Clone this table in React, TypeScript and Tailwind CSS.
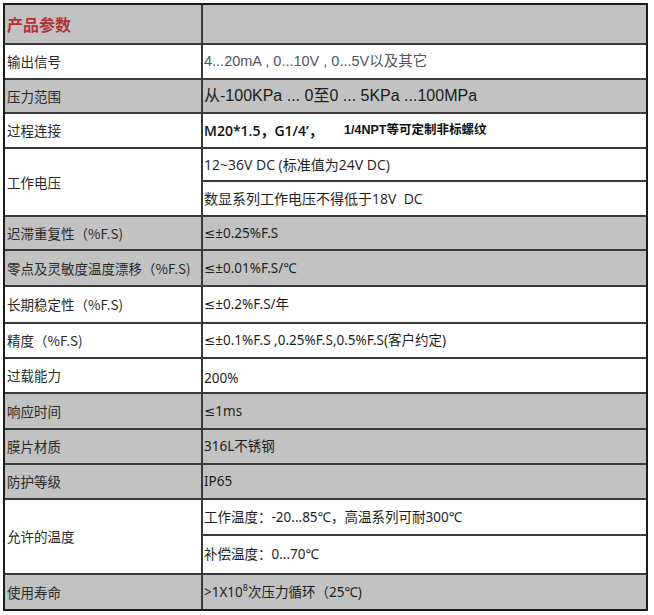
import React from "react";

const CJK = "font-['Noto_Sans_CJK_SC',sans-serif]";
const ARIAL = "font-['Liberation_Sans','Noto_Sans_CJK_SC',sans-serif]";
const VAL = "font-['Noto_Sans','DejaVu_Sans','Noto_Sans_CJK_SC',sans-serif]";
const OPEN = "font-['Open_Sans','Noto_Sans_CJK_SC',sans-serif]";

type Row = {
  label: React.ReactNode;
  value: React.ReactNode;
  h: string;
  gray?: boolean;
  sub?: React.ReactNode;
  subH?: string;
};

const rows: Row[] = [
  {
    label: "输出信号",
    value: <span className={`${ARIAL} text-[14.5px] text-[#555]`}>4...20mA , 0...10V , 0...5V以及其它</span>,
    h: "h-[35px]",
  },
  {
    label: "压力范围",
    value: <span className={`${ARIAL} text-[16px] text-[#1a1a1a]`}>从-100KPa ... 0至0 ... 5KPa ...100MPa</span>,
    h: "h-[34px]",
    gray: true,
  },
  {
    label: "过程连接",
    value: (
      <span className={`${ARIAL} text-[12.5px] font-bold text-[#111] flex items-center`}>
        <span className={`w-[140px] text-[14px] font-semibold ${OPEN}`}>M20*1.5，G1/4’，</span>
        <span>1/4NPT等可定制非标螺纹</span>
      </span>
    ),
    h: "h-[35px]",
  },
  {
    label: "工作电压",
    value: <span className={`${OPEN} text-[14px]`}>12~36V DC (标准值为24V DC)</span>,
    sub: <span className={`${OPEN} text-[14px]`}>数显系列工作电压不得低于18V&nbsp; DC</span>,
    h: "h-[68px]",
    subH: "h-[35px]",
  },
  { label: "迟滞重复性（%F.S)", value: "≤±0.25%F.S", h: "h-[34px]", gray: true },
  { label: "零点及灵敏度温度漂移（%F.S)", value: "≤±0.01%F.S/℃", h: "h-[36px]", gray: true },
  { label: "长期稳定性（%F.S)", value: "≤±0.2%F.S/年", h: "h-[37px]" },
  { label: "精度（%F.S)", value: "≤±0.1%F.S ,0.25%F.S,0.5%F.S(客户约定)", h: "h-[35px]" },
  { label: "过载能力", value: <span className="pt-[5px]">200%</span>, h: "h-[35px]" },
  { label: "响应时间", value: "≤1ms", h: "h-[36px]", gray: true },
  { label: "膜片材质", value: "316L不锈钢", h: "h-[35px]", gray: true },
  { label: "防护等级", value: "IP65", h: "h-[35px]", gray: true },
  {
    label: "允许的温度",
    value: "工作温度：-20...85℃，高温系列可耐300℃",
    sub: "补偿温度：0...70℃",
    h: "h-[75px]",
    subH: "h-[39px]",
  },
  {
    label: "使用寿命",
    value: (
      <span>
        &gt;1X10<span className="text-[9px] align-top leading-none relative top-[1px]">8</span>次压力循环（25℃)
      </span>
    ),
    h: "h-[36px]",
    gray: true,
  },
];

export default function App() {
  return (
    <div className={`w-[654px] h-[615px] bg-white pl-[3px] pt-[3px] ${CJK}`}>
      <div className="w-[645px] border-2 border-[#1c1c1c] flex flex-col">
        <div className="h-[38px] flex bg-[#c2c2c2]">
          <div className="w-[198px] border-r-2 border-[#3a3a3a] flex items-center pl-[2px] text-[16px] font-bold text-[#b2323a]">
            产品参数
          </div>
          <div className="flex-1" />
        </div>
        {rows.map((r, i) => (
          <div
            key={i}
            className={`${r.h} flex border-t-2 border-[#3a3a3a] ${r.gray ? "bg-[#c2c2c2]" : "bg-white"} text-[13.5px] text-[#2a2a2a]`}
          >
            <div className="w-[198px] shrink-0 border-r-2 border-[#3a3a3a] flex items-center pl-[2px]">
              {r.label}
            </div>
            {r.sub ? (
              <div className={`flex-1 flex flex-col ${VAL} text-[#1e1e1e]`}>
                <div className="flex-1 flex items-center pl-[1px]">{r.value}</div>
                <div className={`${r.subH} border-t-2 border-[#3a3a3a] flex items-center pl-[1px]`}>{r.sub}</div>
              </div>
            ) : (
              <div className={`flex-1 flex items-center pl-[1px] ${VAL} text-[#1e1e1e]`}>{r.value}</div>
            )}
          </div>
        ))}
      </div>
    </div>
  );
}
